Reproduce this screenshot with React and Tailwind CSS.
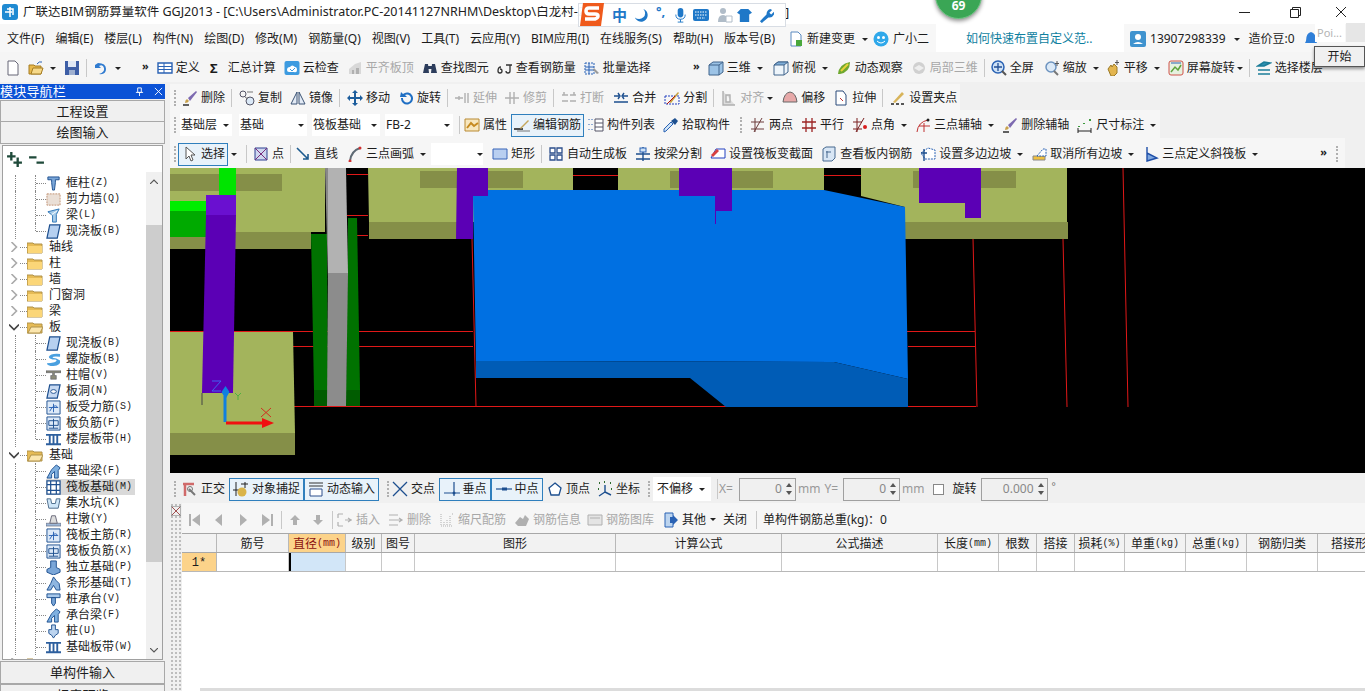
import React from 'react';

// small toolbar glyphs, all drawn on a 16x16 box
const B = '#2a62b4';
const D = '#333';
const G = '#b0b0b0';
const ICONS = {
  page: <path d="M3 1h7l3 3v11H3z" fill="#fff" stroke="#667" />,
  open: <><path d="M1 5h5l1 1h6v8H1z" fill="#e8b94c" stroke="#a57c22" /><path d="M3 14l2-6h10l-2 6z" fill="#f6d98a" stroke="#a57c22" /><path d="M9 4q2-3 5-2" fill="none" stroke="#2a62b4" /></>,
  save: <><path d="M1 1h14v14H1z" fill="#3d5ea6" /><path d="M4 1h8v6H4z" fill="#dfe7f5" /><path d="M5 10h6v5H5z" fill="#9fb0d0" /></>,
  undo: <path d="M3 2v6h6L7 6q4-2 5 2t-5 6q7 1 7-5T6 3L3 5z" fill="#2f7bd0" />,
  define: <><path d="M1 3h14v10H1z" fill="#fff" stroke={B} strokeWidth="1.4" /><path d="M7 3v10M1 6.5h14M1 9.5h14" stroke={B} /></>,
  cloud: <><rect x="0.5" y="1" width="15" height="14" rx="2" fill="#3d9be0" /><path d="M3 10q0-3 3-3 2-3 5 0 2 0 2 3t-3 2H5q-2 0-2-2z" fill="#fff" /><path d="M6 9l2 2 3-3" fill="none" stroke="#3d9be0" /></>,
  flat: <><path d="M2 9l6-5 6-2v12H2z" fill="#d8d8d8" /><path d="M5 10h2v4H5zm4-2h3v6H9z" fill={G} /></>,
  binoc: <><path d="M1 13l2-9h3l1 9zM9 13l1-9h3l2 9z" fill="#2d3d5c" /><path d="M6 6h4v3H6z" fill="#2d3d5c" /></>,
  rebarv: <path d="M1 11q0-4 3-4M1 11q0 2 2 2t2-2-2-2M9 5h6M13 5v6q0 2-2 2t-2-2" fill="none" stroke={D} strokeWidth="1.3" />,
  batch: <><path d="M1 3h9v11H1z" fill="#e8eef8" stroke={B} strokeDasharray="2 1" /><path d="M1 7h9M1 10h9M5 3v11" stroke={B} /><path d="M10 8l5 5-2 1-4-4z" fill="#999" /></>,
  cube: <><path d="M1 5l4-3h10v10l-4 3H1z" fill="#9cc3e6" stroke="#41648c" /><path d="M1 5h10v10M11 5l4-3" fill="none" stroke="#41648c" /></>,
  cubet: <><path d="M1 5l4-3h10v10l-4 3H1z" fill="#eef5fb" stroke="#41648c" /><path d="M1 5l4-3h10l-4 3z" fill="#7faed8" stroke="#41648c" /><path d="M11 5v10" stroke="#41648c" /></>,
  orbit: <><path d="M2 14Q3 4 14 2q0 10-10 12z" fill="#6fa82f" /><path d="M5 11l7-7" stroke="#e8d23a" strokeWidth="2" /></>,
  local: <><circle cx="8" cy="8" r="6" fill="#d0d0d0" /><path d="M3 8l5-3 5 3-5 3z" fill="#eee" /></>,
  full: <><circle cx="7" cy="7" r="6" fill="#cfe2f6" stroke={B} strokeWidth="1.5" /><path d="M7 3v8M3 7h8" stroke="#234f95" strokeWidth="1.3" /><path d="M11 11l4 4" stroke="#555" strokeWidth="2" /></>,
  zoom: <><circle cx="7" cy="7" r="5" fill="#dbe9f7" stroke="#6d93bf" strokeWidth="1.5" /><path d="M10 11l4 4" stroke="#777" strokeWidth="2" /><path d="M13 1v5M11 3.500h4" stroke="#555" /></>,
  hand: <><path d="M3 9l3-4 1 2 2-3 3 3v6l-3 3H6z" fill="#e3b54f" stroke="#9a7a28" /><path d="M12 0v5M10 2.500h4" stroke="#555" /></>,
  rotscr: <><rect x="1" y="1" width="14" height="14" rx="2" fill="#e6f1df" stroke="#d0534a" /><path d="M3 12l4-5 3 3 3-5" fill="none" stroke="#5ea33c" strokeWidth="1.5" /><path d="M3 3h10" stroke="#2a62b4" /></>,
  floors: <><path d="M2 6l6-4 6 1-6 3zM2 10h12M2 14h12" fill="#2e8fb0" stroke="#1c7d99" strokeWidth="1.6" /></>,
  brush: <><path d="M1 15h6" stroke="#222" strokeWidth="1.4" /><path d="M3 13q0-3 2-4l2 2q-1 2-4 2z" fill="#c9a24d" /><path d="M6 8l8-7 1 1-7 9z" fill="#7d6ab0" /></>,
  copy: <><circle cx="4" cy="4" r="3" fill="none" stroke="#556" /><circle cx="11" cy="11" r="4" fill="#dbe9f7" stroke="#556" /><path d="M8 2h6M6 7l3 2" stroke="#777" /></>,
  mirror: <path d="M7 2v12H1zM9 2v12h6z" fill="#e2eaf5" stroke="#3b5374" />,
  move: <path d="M8 0l3 3H9v4h4V5l3 3-3 3V9H9v4h2l-3 3-3-3h2V9H3v2L0 8l3-3v2h4V3H5z" fill="#1c5d9c" />,
  rotate: <path d="M3 2l2 2a6 6 0 1 1-2 4h2a4 4 0 1 0 2-3l2 2H2z" fill="#1f6fc4" />,
  extend: <path d="M1 8h8M11 3v10M14 3v10M5 6v4" stroke={G} strokeWidth="1.4" />,
  trim: <path d="M1 8h14M6 2v12M10 2v12" stroke={G} strokeWidth="1.4" />,
  break: <path d="M1 5h6M9 5h6M1 11h6M9 11h6M3 2v3M13 2v3" stroke={G} strokeWidth="1.5" />,
  merge: <path d="M1 6h5M10 6h5M1 12h14M5 3l2 3-2 3M11 3L9 6l2 3" fill="none" stroke="#1d4f8f" strokeWidth="1.4" />,
  split: <><path d="M1 6h14v8H1z" fill="none" stroke="#2340c0" strokeDasharray="2 1" /><path d="M5 12l9-10 1 1-8 10z" fill="#c8a040" /><path d="M3 14l8-8" stroke="#b01010" /></>,
  align: <path d="M2 1v14h12M5 5h4v7H5z" fill="#ddd" stroke={G} strokeWidth="1.4" />,
  offset: <path d="M1 12Q2 3 8 2q6 1 7 10z" fill="#e7a9a9" stroke="#666" />,
  stretch: <><path d="M3 1h7l3 4v10H3z" fill="#fff" stroke="#2b4a7a" /><path d="M7 8l3 3" stroke="#c03030" /></>,
  grip: <><path d="M1 14h3M6 14h3M11 14h3" stroke="#222" strokeWidth="1.4" /><path d="M3 12l9-10 2 2-9 9z" fill="#d8b45a" /></>,
  prop: <><path d="M1 2h14v12H1z" fill="#f7e7bf" stroke="#b98a32" /><path d="M3 11l4-5 3 3 4-3" fill="none" stroke="#c68a20" strokeWidth="2" /></>,
  edit: <><path d="M0 12h9" stroke="#222" strokeWidth="1.6" /><path d="M6 11l8-8 1 1-8 8z" fill="#c4a65c" /><path d="M3 14h13" stroke="#777" /></>,
  list: <><path d="M1 2v2M1 7v2M1 12v2M4 2v2M4 7v2M4 12v2" stroke="#2a62b4" strokeDasharray="1 1" /><path d="M7 2h8v12H7zM7 6h8M7 10h8" fill="#fff" stroke="#556" /></>,
  picker: <><path d="M1 15l2-1 7-7-2-2-7 7z" fill="#cfe4f7" stroke={B} /><path d="M8 4l4 4 3-4-3-3z" fill="#1d4f8f" /></>,
  twop: <path d="M1 5h13M1 12h13M4 15l8-14M5 1v14" stroke="#6d3d3d" fill="none" />,
  para: <path d="M1 5h14M1 11h14M5 1v14M11 1v14" stroke="#9c2424" strokeWidth="1.3" />,
  ang: <><path d="M1 5h9M1 12h9M4 15l8-14M5 1v14" stroke="#7a2020" fill="none" /><circle cx="13" cy="10" r="2" fill="#d81f1f" /></>,
  arc3: <><path d="M2 15Q3 5 13 3M9 6v9M4 9h11" fill="none" stroke="#c03030" /><circle cx="13" cy="3" r="1.500" fill="#222" /></>,
  dim: <><path d="M1 14h13M1 11v5M14 11v5" stroke="#222" /><path d="M2 9v1M7 6v1M13 2v2" stroke="#3c9a3c" strokeWidth="2" /></>,
  cursor: <path d="M4 1v12l3-3 2 5 2-1-2-5h4z" fill="#fff" stroke="#555" />,
  point: <><path d="M2 2h12v12H2z" fill="#cfd7f0" stroke="#2d3f90" /><path d="M2 2l12 12M14 2L2 14" stroke="#7a2d7a" /></>,
  line: <path d="M2 2l11 11M13 8v5H8" fill="none" stroke="#1d5b8f" strokeWidth="1.6" />,
  arc: <><path d="M3 15Q4 5 13 2" fill="none" stroke="#5f6b75" strokeWidth="2" /><circle cx="13" cy="2" r="1.500" fill="#d03030" /><circle cx="3" cy="15" r="1.500" fill="#d03030" /></>,
  rect: <path d="M1 3h14v10H1z" fill="#b9cff0" stroke="#3864b8" />,
  auto: <path d="M2 2h5v5H2zM9 2h5v5H9zM2 9h5v5H2zM9 9h5v5H9z" fill="#fff" stroke="#2d4f8c" strokeWidth="1.3" />,
  beam: <><path d="M1 8h14M1 13h14M8 1v14" stroke="#1d4f8f" strokeWidth="1.4" /><rect x="5" y="2" width="6" height="4" fill="#cfe2f6" stroke={B} /></>,
  section: <><path d="M1 12l5-9h9v9z" fill="#fff" stroke="#2340c0" /><path d="M1 9l6-6 2 2-6 6z" fill="#d84040" /></>,
  view: <><path d="M2 3l3-2h9v11l-3 3H2z" fill="#d8e6f5" stroke="#46698f" /><path d="M6 5v7M5 6h5" stroke="#46698f" /></>,
  slope: <><path d="M1 7l7-5 7 2v9H5z" fill="#fff" stroke="#2a62b4" strokeDasharray="2 1" /><path d="M1 7h6M4 3v12" stroke="#1d4f8f" strokeWidth="1.4" /></>,
  cancel: <><path d="M2 10h12v4H2z" fill="#f0c040" stroke="#888" /><path d="M6 10l6-7h3v7z" fill="#fff" stroke="#2a62b4" strokeDasharray="2 1" /></>,
  tri: <path d="M4 1v14M4 15l10-3L4 7z" fill="#7fa8e0" stroke="#1f4fa8" strokeWidth="1.4" />,
  ortho: <><path d="M1 3h11M3 3v12" stroke="#d06a6a" strokeWidth="2.500" /><path d="M7 8l6 6" stroke="#777" strokeWidth="2" /><circle cx="8" cy="8" r="2.500" fill="none" stroke="#777" /></>,
  snap: <><path d="M3 1v14M12 1v6M0 9h6M8 3h7" stroke="#222" /><circle cx="9" cy="11" r="4.500" fill="#d9b44a" /></>,
  dyn: <><path d="M1 2h14M1 5h14" stroke="#333" /><path d="M2 8h12v7H2z" fill="#fff" stroke="#2d4f8c" /></>,
  cross: <path d="M1 1l14 14M15 1L1 15" stroke="#1d4f8f" strokeWidth="1.3" />,
  perp: <><path d="M0 12h16M10 1v14" stroke="#1d4f8f" strokeWidth="1.2" /><circle cx="10" cy="12" r="1.500" fill="#1d4f8f" /></>,
  mid: <><path d="M0 8h16" stroke="#1d4f8f" strokeWidth="1.2" /><rect x="6" y="6.500" width="5" height="3" fill="#1d4f8f" /></>,
  vertex: <path d="M8 2l6 5-2 7H4L2 7z" fill="#fff" stroke="#1d4f8f" strokeWidth="1.3" />,
  coord: <><path d="M8 4v7L2 15M8 11l6 3" fill="none" stroke="#1d4f8f" strokeWidth="1.4" /><path d="M2 2h1M7 1h1M13 2h1M1 8h1M14 8h1" stroke="#2d6a2d" strokeWidth="2" /></>,
  first: <path d="M2 2h2v12H2zM13 2v12L5 8z" fill={G} />,
  prev: <path d="M11 2v12L4 8z" fill={G} />,
  next: <path d="M5 2v12l7-6z" fill={G} />,
  last: <path d="M14 2h-2v12h2zM3 2v12l8-6z" fill={G} />,
  up: <path d="M8 3l5 5H10v5H6V8H3z" fill={G} />,
  down: <path d="M8 13l5-5H10V3H6v5H3z" fill={G} />,
  ins: <path d="M1 2h5M1 14h5M1 2v4M1 10v4M8 8h7M11 6l3 2-3 2" fill="none" stroke={G} strokeWidth="1.2" />,
  rem: <path d="M1 3h9M1 13h9M1 8h13M11 6l3 2-3 2" fill="none" stroke={G} strokeWidth="1.2" />,
  scale: <path d="M2 2v12h12M5 13v-3M8 13V8M11 13V4M13 2h2" fill="none" stroke={G} strokeDasharray="1 1" />,
  info: <path d="M1 11l5-6 3 2 2-4 4 4-3 7H4z" fill={G} />,
  lib: <path d="M1 3h14v10H1zM3 6h10" fill="#e4e4e4" stroke={G} />,
  other: <><path d="M2 1h8v14H2z" fill="#bcd4ef" stroke={B} /><path d="M7 5h3V3l5 5-5 5v-2H7z" fill="#2a62b4" /></>,
  tcol: <path d="M2 1h12v3h-4v3l-1 8H7L6 7V4H2z" fill="#7aa6d8" stroke="#1d4f8f" />,
  twall: <path d="M1 2h14v12H1z" fill="#eadfd6" stroke="#c09070" strokeDasharray="2 1" />,
  tbeam: <><path d="M2 4l12-3-3 6v8H7V8z" fill="#a8cdea" stroke="#2a72b4" /><path d="M6 7l6-4" stroke="#fff" /></>,
  tslab: <path d="M4 1h11l-3 14H1z" fill="#b6d0f0" stroke="#1d4f8f" strokeWidth="1.3" />,
  tspiral: <path d="M15 2Q5 1 3 5q0 3 7 3 3 1-1 3-4 1-8 1 0 3 7 3 8-1 7-6-4-3-8-3 0-2 8-1z" fill="#4aa0e0" />,
  tcap: <path d="M0 3h16v2H9v3h2v4H5V8h2V5H0z" fill="#8a8a7a" stroke="#445" strokeWidth="0.5" />,
  thole: <><path d="M4 1h11l-3 14H1z" fill="#c6d9f2" stroke="#1d4f8f" strokeWidth="1.3" /><ellipse cx="8" cy="8" rx="3" ry="2" fill="#fff" stroke="#1d4f8f" /></>,
  tbar: <><path d="M1 1h14v14H1z" fill="#dce9f8" stroke="#1d4f8f" /><path d="M8 4v9M3 8h10M4 12q4-8 8-5" fill="none" stroke="#2a62b4" /></>,
  tneg: <><path d="M1 1h14v14H1z" fill="#dce9f8" stroke="#1d4f8f" /><path d="M3 5h10v5H3zM8 3v10M3 13h10" fill="none" stroke="#1d4f8f" /></>,
  tband: <path d="M0 2h16v2H0zM0 12h16v2H0zM3 4h2v8H3zM7 4h2v8H7zM11 4h2v8h-2z" fill="#2d5f9e" />,
  tfbeam: <><path d="M1 15l5-9 5-5 4 3-2 3v8H9V8l-3 3v4z" fill="#7fb0e0" stroke="#1d4f8f" /></>,
  traft: <path d="M1 1h14v14H1zM1 5h14M1 11h14M5 1v14M11 1v14" fill="#fff" stroke="#1d4f8f" strokeWidth="1.3" />,
  tpit: <><path d="M1 3h4l1 5h4l1-5h4l-2 10H3z" fill="#cfe6f8" stroke="#4a6a8a" /></>,
  tpier: <><path d="M0 12h16v3H0z" fill="#9eb8d8" stroke="#445" strokeWidth="0.5" /><path d="M6 4h4l2 8H4z" fill="#ddd" stroke="#667" /></>,
  tiso: <path d="M5 1h6v7l4 2v3l-7 3-7-3v-3l4-2z" fill="#7aa6d8" stroke="#1d4f8f" />,
  tstrip: <path d="M1 15l4-7 3-7 3 4 3 3 1 7h-4L8 10l-3 5z" fill="#8fb6e0" stroke="#1d4f8f" />,
  tcapb: <><path d="M1 2h14v4H1z" fill="#a8c8ea" stroke="#1d4f8f" /><path d="M6 6h4v6l-2 3-2-3z" fill="#7aa6d8" stroke="#1d4f8f" /></>,
  tpile: <path d="M6 1h4v5h3v4l-3 2-2 3-2-3-3-2V6h3z" fill="#bcd4ef" stroke="#1d4f8f" />,
};

function Ico({ n, className = 'size-4' }) {
  return (
    <svg viewBox="0 0 16 16" className={'shrink-0 ' + className}>
      {ICONS[n]}
    </svg>
  );
}

// one toolbar entry: icon and label
function T({ i, t, gray, cls = '' }) {
  return (
    <div className={'flex items-center gap-[3px] shrink-0 ' + (gray ? 'text-[#a8a8a8] ' : '') + cls}>
      {i && <Ico n={i} />}
      {t && <span className="whitespace-nowrap">{t}</span>}
    </div>
  );
}

const Caret = ({ cls = '' }) => (
  <span className={'w-0 h-0 shrink-0 -ml-[1px] border-x-[3px] border-x-transparent border-t-[3px] border-t-[#222] ' + cls} />
);
const Sep = ({ cls = '' }) => <span className={'w-px h-[18px] shrink-0 -mx-[2px] bg-[#c8c8c8] ' + cls} />;
const Grip = ({ cls = '' }) => (
  <span className={'w-[2px] h-[16px] shrink-0 border-l-2 border-dotted border-[#b0b0b0] ' + cls} />
);
const More = ({ cls = '' }) => <span className={'shrink-0 text-[11px] font-bold leading-none -mt-[6px] ' + cls}>»</span>;

function Combo({ t, cls }) {
  return (
    <div className={'flex items-center justify-between h-[22px] bg-white pl-[1px] pr-[3px] shrink-0 ' + cls}>
      <span className="whitespace-nowrap">{t}</span>
      <span className="w-0 h-0 border-x-[3px] border-x-transparent border-t-[3px] border-t-[#222]" />
    </div>
  );
}

function Pressed({ i, t, cls = '' }) {
  return (
    <div className={'flex items-center justify-center gap-[3px] h-[23px] px-[2px] border border-[#2f7fbd] bg-[#e8f2fa] shrink-0 ' + cls}>
      <Ico n={i} />
      <span className="whitespace-nowrap">{t}</span>
    </div>
  );
}

function Spin({ v, cls }) {
  return (
    <div className={'flex items-center justify-end h-[23px] border border-[#a0a0a0] bg-[#f0f0f0] text-[#888] pr-[2px] shrink-0 ' + cls}>
      <span className="mr-[4px]">{v}</span>
      <span className="flex flex-col gap-[4px] pr-[1px]">
        <span className="w-0 h-0 border-x-[3px] border-x-transparent border-b-[4px] border-b-[#555]" />
        <span className="w-0 h-0 border-x-[3px] border-x-transparent border-t-[4px] border-t-[#555]" />
      </span>
    </div>
  );
}

const MENU = ['文件(F)', '编辑(E)', '楼层(L)', '构件(N)', '绘图(D)', '修改(M)', '钢筋量(Q)', '视图(V)', '工具(T)', '云应用(Y)', 'BIM应用(I)', '在线服务(S)', '帮助(H)', '版本号(B)'];

// [kind, icon, name, code]; f = closed folder, o = open folder, c = child, l = last child
const TREE = [
  ['c', 'tcol', '框柱', '(Z)'], ['c', 'twall', '剪力墙', '(Q)'], ['c', 'tbeam', '梁', '(L)'], ['l', 'tslab', '现浇板', '(B)'],
  ['f', '', '轴线'], ['f', '', '柱'], ['f', '', '墙'], ['f', '', '门窗洞'], ['f', '', '梁'], ['o', '', '板'],
  ['c', 'tslab', '现浇板', '(B)'], ['c', 'tspiral', '螺旋板', '(B)'], ['c', 'tcap', '柱帽', '(V)'], ['c', 'thole', '板洞', '(N)'],
  ['c', 'tbar', '板受力筋', '(S)'], ['c', 'tneg', '板负筋', '(F)'], ['l', 'tband', '楼层板带', '(H)'], ['o', '', '基础'],
  ['c', 'tfbeam', '基础梁', '(F)'], ['c', 'traft', '筏板基础', '(M)', true], ['c', 'tpit', '集水坑', '(K)'], ['c', 'tpier', '柱墩', '(Y)'],
  ['c', 'tbar', '筏板主筋', '(R)'], ['c', 'tneg', '筏板负筋', '(X)'], ['c', 'tiso', '独立基础', '(P)'], ['c', 'tstrip', '条形基础', '(T)'],
  ['c', 'tcapb', '桩承台', '(V)'], ['c', 'tfbeam', '承台梁', '(F)'], ['c', 'tpile', '桩', '(U)'], ['c', 'tband', '基础板带', '(W)'],
  ['f', '', ''],
];

function Folder({ open }) {
  return (
    <svg viewBox="0 0 16 13" className="w-[16px] h-[13px] shrink-0">
      <path d="M0 2h6l1 1h8v9H0z" fill="#e6bb55" stroke="#b0924a" />
      {open ? <path d="M1 12l3-6h12l-3 6z" fill="#fbe6ae" stroke="#b0924a" /> : <path d="M1 5h14v7H1z" fill="#fbd678" />}
    </svg>
  );
}

function TreeRow({ row }) {
  const [kind, icon, name, code, sel] = row;
  if (kind === 'f' || kind === 'o') {
    return (
      <div className="flex items-center h-4 pl-[6px] shrink-0">
        <svg viewBox="0 0 8 8" className="w-[10px] h-[10px] shrink-0">
          <path d={kind === 'o' ? 'M0 2l4 4 4-4' : 'M2 0l4 4-4 4'} fill="none" stroke={kind === 'o' ? '#444' : '#aaa'} strokeWidth="1.3" />
        </svg>
        <span className="w-[7px] ml-[1px] border-t border-dotted border-[#888] shrink-0" />
        <Folder open={kind === 'o'} />
        <span className="ml-[6px]">{name}</span>
      </div>
    );
  }
  return (
    <div className="flex items-center h-4 pl-[12px] shrink-0">
      <span className="h-4 w-[20px] border-l border-dotted border-[#888] shrink-0" />
      <span className={'w-px border-l border-dotted border-[#888] shrink-0 ' + (kind === 'l' ? 'h-2 self-start' : 'h-4')} />
      <span className="w-[10px] border-t border-dotted border-[#888] shrink-0" />
      <div className={'flex items-center h-4 ' + (sel ? 'bg-[#d9d9d9] pr-[3px]' : '')}>
        <Ico n={icon} className="size-[15px]" />
        <span className="ml-[5px] whitespace-nowrap">{name}</span>
        <span className="font-['Liberation_Mono',monospace] text-[10px]">{code}</span>
      </div>
    </div>
  );
}

const COLS = 'grid grid-cols-[35px_72px_57px_36px_33px_201px_166px_156px_61px_38px_38px_50px_61px_61px_71px_75px]';
const HEAD = [['筋号'], ['直径', '(mm)'], ['级别'], ['图号'], ['图形'], ['计算公式'], ['公式描述'], ['长度', '(mm)'], ['根数'], ['搭接'], ['损耗', '(%)'], ['单重', '(kg)'], ['总重', '(kg)'], ['钢筋归类'], ['搭接形式']];

function Scene() {
  const olive = '#a3b45c';
  const oliveD = '#858f48';
  const purple = '#5b00b5';
  const blue = '#0070e2';
  return (
    <svg viewBox="170 168 1195 305" className="w-[1195px] h-[305px] block bg-black shrink-0">
      <g stroke="#e01818" strokeWidth="1" fill="none">
        <path d="M170 331.500h303M293 346.500h180M294 406.500h682M472 238l4 169M347 174.500h21M347 215.500h21M357 235.500h11M573 175.500h45M824 175.500h37M907 331.500h68M908 346.500h67M973 238l4 169M1063 239l4 168M1123 168l5 239" />
      </g>
      {/* left slab */}
      <path d="M170 168h155v64h-155z" fill={olive} />
      <path d="M170 174h112v17H170z" fill={oliveD} />
      <path d="M170 232h141v17H170z" fill={oliveD} />
      <path d="M219 168h17v27h-17z" fill="#00e400" />
      <path d="M170 201h36v10h-36z" fill="#00ee00" />
      <path d="M170 211h36v26h-36z" fill="#00aa00" />
      {/* bottom left footing */}
      <path d="M170 332h123l2 101H170z" fill={olive} />
      <path d="M170 433h125v22H170z" fill={oliveD} />
      <path d="M206 195h30v20h-30z" fill="#6a10d0" />
      <path d="M206 215h30l-3 178h-31z" fill={purple} />
      <path d="M202 393v12" stroke="#444" />
      {/* green and grey columns */}
      <path d="M311 234h16l1 156h-14z" fill="#007200" />
      <path d="M314 390h14v16h-14z" fill="#005c00" />
      <path d="M348 218h9l3 172h-14z" fill="#007200" />
      <path d="M346 390h14v16h-14z" fill="#005c00" />
      <path d="M325 168h6v112h-3z" fill="#888" />
      <path d="M328 168h18l2 105h-20z" fill="#b2b2b2" />
      <path d="M328 273h20l-2 133h-19z" fill="#8c8c8c" />
      {/* middle slabs */}
      <path d="M368 168h205v22H488v32H369z" fill={olive} />
      <path d="M420 171h103v17H420z" fill={oliveD} />
      <path d="M369 222h88v17h-88z" fill={oliveD} />
      <path d="M618 168h206v22H618z" fill={olive} />
      <path d="M670 171h103v17H670z" fill={oliveD} />
      <path d="M861 168h206v54H905v-15l-44-11z" fill={olive} />
      <path d="M905 222h163v17H905z" fill={oliveD} />
      <path d="M913 171h103v17H913z" fill={oliveD} />
      <path d="M457 168h31v28h-15v43h-17z" fill={purple} />
      {/* blue raft */}
      <path d="M473 196h15v-6h336l81 17 3 172-74-17-358-1z" fill={blue} />
      <path d="M476 361l358 1 74 17v28H726l-36-29H476z" fill="#005cb6" />
      <path d="M679 168h53v43h-16v-15h-37z" fill={purple} />
      <path d="M715.500 196v28" stroke={purple} />
      <path d="M919 168h62v50h-16v-15h-46z" fill={purple} />
      {/* axis marker */}
      <path d="M225 422v-26" stroke="#1080e0" strokeWidth="3" />
      <path d="M225.500 386l4 6-4 7-4-7z" fill="#1080e0" />
      <path d="M226 423h38" stroke="#f01010" strokeWidth="3" />
      <path d="M262 418l12 5-12 5z" fill="#f01010" />
      <path d="M212 381h9l-9 10h9" fill="none" stroke="#4060f0" />
      <path d="M261 408l10 9M271 408l-10 9" stroke="#d03020" />
      <path d="M235 393l3 3 3-3M238 396v4" fill="none" stroke="#50b040" />
    </svg>
  );
}

export default function App() {
  return (
    <div className="relative w-[1365px] h-[691px] overflow-hidden flex flex-col bg-[#f0f0f0] text-[12px] leading-none text-[#1c1c1c] font-['Noto_Sans','Noto_Sans_CJK_SC',sans-serif]">
      {/* title bar */}
      <div className="h-[24px] shrink-0 bg-white flex items-center pl-[2px]">
        <svg viewBox="0 0 16 16" className="size-4 shrink-0">
          <rect width="16" height="16" rx="3" fill="#1f8ad2" />
          <path d="M8 3v10M3 8h7M5 5h6v6" fill="none" stroke="#fff" strokeWidth="1.5" />
        </svg>
        <span className="ml-[5px] w-[762px] whitespace-nowrap overflow-hidden text-[12.500px] text-[#222]">
          广联达BIM钢筋算量软件 GGJ2013 - [C:\Users\Administrator.PC-20141127NRHM\Desktop\白龙村-2
        </span>
        <span className="text-[13px]">]</span>
        <div className="ml-auto flex items-center">
          <span className="w-[11px] h-px bg-[#222] mr-[40px]" />
          <svg viewBox="0 0 11 11" className="size-[11px] mr-[34px]">
            <path d="M.5 2.500h8v8h-8zM2.500 2.500v-2h8v8h-2" fill="none" stroke="#222" />
          </svg>
          <svg viewBox="0 0 12 12" className="size-[12px] mr-[18px]">
            <path d="M1 1l10 10M11 1L1 11" stroke="#222" />
          </svg>
        </div>
      </div>

      {/* menu bar */}
      <div className="h-[28px] shrink-0 bg-[#f7f7f7] flex items-center pt-[2px] pl-[7px] gap-[10px]">
        <div className="flex items-center gap-[11px] shrink-0">
          {MENU.map((m) => (
            <span key={m} className="whitespace-nowrap">{m}</span>
          ))}
        </div>
        <svg viewBox="0 0 16 16" className="size-4 shrink-0 -mr-[7px] ml-[3px]">
          <path d="M3 1h7l3 3v11H3z" fill="#fff" stroke="#5a8ac0" />
          <path d="M8 9h6v6H8z" fill="#4aa83c" />
        </svg>
        <span className="whitespace-nowrap">新建变更</span>
        <Caret cls="ml-[-3px]" />
        <svg viewBox="0 0 16 16" className="size-4 shrink-0 -mr-[6px] ml-[-5px]">
          <circle cx="8" cy="8" r="7.500" fill="#2fa8ea" />
          <circle cx="5.500" cy="6.500" r="1.500" fill="#fff" />
          <circle cx="10.500" cy="6.500" r="1.500" fill="#fff" />
          <path d="M4 10q4 4 8 0" fill="none" stroke="#fff" />
        </svg>
        <span className="whitespace-nowrap">广小二</span>
        <div className="w-[188px] h-[28px] -mt-[2px] ml-[-3px] pt-[2px] bg-white flex items-center pl-[30px] text-[#0f7f9f] whitespace-nowrap shrink-0">如何快速布置自定义范..</div>
        <svg viewBox="0 0 16 16" className="size-4 shrink-0 ml-[-4px] -mr-[6px]">
          <rect width="16" height="16" rx="2" fill="#3f93cf" />
          <circle cx="8" cy="6" r="3" fill="#fff" />
          <path d="M3 13q5-4 10 0z" fill="#fff" />
        </svg>
        <span className="whitespace-nowrap">13907298339</span>
        <Caret cls="ml-[-2px]" />
        <span className="whitespace-nowrap ml-[-1px]">造价豆:0</span>
        <svg viewBox="0 0 12 16" className="w-[12px] h-4 shrink-0">
          <path d="M6 1Q1 2 1 10l-1 2h12l-1-2Q11 2 6 1z" fill="#2f7fd8" />
        </svg>
      </div>

      {/* top toolbar */}
      <div className="h-[30px] shrink-0 bg-[#f5f5f5] flex items-center pt-[2px] pl-[5px] gap-[8px]">
        <T i="page" />
        <T i="open" cls="ml-[-1px]" />
        <Caret cls="ml-[-2px]" />
        <T i="save" />
        <Sep />
        <T i="undo" cls="ml-[-1px]" />
        <Caret cls="ml-[-1px]" />
        <More cls="ml-[13px]" />
        <T i="define" t="定义" />
        <span className="font-bold text-[13px] w-[12px] text-center shrink-0">Σ</span>
        <span className="whitespace-nowrap">汇总计算</span>
        <T i="cloud" t="云检查" />
        <T i="flat" t="平齐板顶" gray />
        <T i="binoc" t="查找图元" />
        <T i="rebarv" t="查看钢筋量" />
        <T i="batch" t="批量选择" />
        <More cls="ml-[34px]" />
        <T i="cube" t="三维" />
        <Caret cls="ml-[-2px]" />
        <T i="cubet" t="俯视" cls="ml-[2px]" />
        <Caret cls="ml-[-2px]" />
        <T i="orbit" t="动态观察" />
        <T i="local" t="局部三维" gray />
        <Sep />
        <T i="full" t="全屏" />
        <T i="zoom" t="缩放" cls="ml-[2px]" />
        <Caret cls="ml-[-2px]" />
        <T i="hand" t="平移" cls="ml-[-2px]" />
        <Caret cls="ml-[-2px]" />
        <T i="rotscr" t="屏幕旋转" />
        <Caret cls="ml-[-6px]" />
        <Sep />
        <T i="floors" t="选择楼层" />
      </div>
      <div className="h-[2px] shrink-0" />

      <div className="flex-1 flex min-h-0">
        {/* module nav */}
        <aside className="w-[165px] shrink-0 flex flex-col">
          <div className="h-[15px] shrink-0 bg-[#0b52d6] text-white flex items-center text-[13px] tracking-[0.2px]">
            <span>模块导航栏</span>
            <svg viewBox="0 0 10 10" className="size-[9px] ml-[69px]">
              <path d="M3 1h4v5H3zM1 6h8M5 6v4" fill="none" stroke="#fff" />
            </svg>
            <svg viewBox="0 0 10 10" className="size-[9px] ml-[10px]">
              <path d="M1 1l8 8M9 1L1 9" stroke="#fff" />
            </svg>
          </div>
          <div className="h-[22px] shrink-0 mt-[1px] border border-[#a8a8a8] bg-[#f0f0f0] text-[13px] flex items-center justify-center">工程设置</div>
          <div className="h-[22px] shrink-0 border border-t-0 border-[#a8a8a8] bg-[#f0f0f0] text-[13px] flex items-center justify-center">绘图输入</div>
          <div className="flex-1 min-h-0 mx-[2px] mt-[1px] flex flex-col border border-[#a0a0a0] bg-white">
            <div className="h-[26px] shrink-0 flex items-center pl-[3px] gap-[5px]">
              <svg viewBox="0 0 16 16" className="size-[17px]">
                <path d="M5 1v8M1 5h8M11 6v9M7 11h8" stroke="#1f4a3a" strokeWidth="2.200" />
              </svg>
              <svg viewBox="0 0 16 16" className="size-[17px]">
                <path d="M1 6h7M8 11h7" stroke="#1f4a3a" strokeWidth="2.200" />
              </svg>
            </div>
            <div className="flex-1 min-h-0 flex">
              <div className="flex-1 min-w-0 overflow-hidden flex flex-col pt-[3px]">
                {TREE.map((r, idx) => (
                  <TreeRow key={idx} row={r} />
                ))}
              </div>
              <div className="w-[16px] shrink-0 bg-[#f0f0f0] flex flex-col">
                <div className="h-[19px] shrink-0 flex items-center justify-center text-[#555]">
                  <svg viewBox="0 0 8 5" className="w-[8px] h-[5px]"><path d="M0 5l4-4 4 4" fill="none" stroke="#555" strokeWidth="1.200" /></svg>
                </div>
                <div className="h-[337px] mt-[34px] shrink-0 bg-[#cdcdcd]" />
                <div className="mt-auto h-[17px] shrink-0 flex items-center justify-center">
                  <svg viewBox="0 0 8 5" className="w-[8px] h-[5px]"><path d="M0 0l4 4 4-4" fill="none" stroke="#555" strokeWidth="1.200" /></svg>
                </div>
              </div>
            </div>
          </div>
          <div className="h-[23px] shrink-0 mt-[1px] border border-[#a8a8a8] bg-[#f0f0f0] text-[13px] flex items-center justify-center">单构件输入</div>
          <div className="h-[22px] shrink-0 -mb-[15px] border border-[#a8a8a8] bg-[#f0f0f0] text-[13px] flex items-center justify-center">报表预览</div>
        </aside>

        {/* work area */}
        <main className="flex-1 min-w-0 ml-[5px] flex flex-col">
          <div className="h-[26px] shrink-0 w-[790px] bg-[#f6f6f6] flex items-center pt-[2px] pl-[4px] gap-[8px]">
            <Grip />
            <T i="brush" t="删除" cls="ml-[-2px]" />
            <Sep />
            <T i="copy" t="复制" cls="ml-[1px]" />
            <T i="mirror" t="镜像" />
            <Sep />
            <T i="move" t="移动" cls="ml-[1px]" />
            <T i="rotate" t="旋转" />
            <Sep />
            <T i="extend" t="延伸" gray />
            <T i="trim" t="修剪" gray cls="ml-[-1px]" />
            <Sep />
            <T i="break" t="打断" gray cls="ml-[1px]" />
            <T i="merge" t="合并" cls="ml-[1px]" />
            <T i="split" t="分割" />
            <Sep />
            <T i="align" t="对齐" gray cls="ml-[1px]" />
            <Caret cls="ml-[-5px]" />
            <T i="offset" t="偏移" cls="ml-[1px]" />
            <T i="stretch" t="拉伸" />
            <Sep />
            <T i="grip" t="设置夹点" cls="ml-[1px]" />
          </div>

          <div className="h-[28px] shrink-0 w-[990px] bg-[#f6f6f6] flex items-center pt-[2px] pl-[4px] gap-[8px]">
            <Grip />
            <Combo t="基础层" cls="w-[52px] ml-[-4px]" />
            <Combo t="基础" cls="w-[68px] ml-[-1px]" />
            <Combo t="筏板基础" cls="w-[68px] ml-[-3px]" />
            <Combo t="FB-2" cls="w-[68px] ml-[-3px]" />
            <Sep cls="ml-[-2px]" />
            <T i="prop" t="属性" cls="ml-[-2px]" />
            <Pressed i="edit" t="编辑钢筋" cls="ml-[-4px]" />
            <T i="list" t="构件列表" cls="ml-[-4px]" />
            <T i="picker" t="拾取构件" />
            <Grip cls="ml-[2px]" />
            <T i="twop" t="两点" />
            <T i="para" t="平行" />
            <T i="ang" t="点角" />
            <Caret cls="ml-[-2px]" />
            <T i="arc3" t="三点辅轴" />
            <Caret cls="ml-[-2px]" />
            <T i="brush" t="删除辅轴" />
            <T i="dim" t="尺寸标注" />
            <Caret cls="ml-[-2px]" />
          </div>

          <div className="h-[30px] shrink-0 w-[1175px] bg-[#f6f6f6] flex items-center pt-[2px] pl-[4px] gap-[8px]">
            <Grip />
            <Pressed i="cursor" t="选择" cls="ml-[-6px] pl-[3px] pr-[2px]" />
            <Caret cls="ml-[-5px]" />
            <Sep cls="ml-[1px]" />
            <T i="point" t="点" />
            <Sep />
            <T i="line" t="直线" cls="ml-[-2px]" />
            <T i="arc" t="三点画弧" cls="ml-[1px]" />
            <Caret cls="ml-[-2px]" />
            <div className="w-[52px] h-[22px] bg-white shrink-0 ml-[-3px] flex items-center justify-end pr-[0px]">
              <span className="w-0 h-0 border-x-[3px] border-x-transparent border-t-[3px] border-t-[#222]" />
            </div>
            <T i="rect" t="矩形" cls="ml-[1px]" />
            <Sep />
            <T i="auto" t="自动生成板" />
            <T i="beam" t="按梁分割" />
            <T i="section" t="设置筏板变截面" />
            <T i="view" t="查看板内钢筋" />
            <T i="slope" t="设置多边边坡" />
            <Caret cls="ml-[-2px]" />
            <T i="cancel" t="取消所有边坡" />
            <Caret cls="ml-[-2px]" />
            <T i="tri" t="三点定义斜筏板" cls="ml-[1px]" />
            <Caret cls="ml-[-2px]" />
            <More cls="ml-[54px]" />
            <Grip cls="ml-[1px]" />
          </div>

          <Scene />

          {/* snap toolbar */}
          <div className="h-[30px] shrink-0 bg-[#f0f0f0] flex items-center pt-[2px] pl-[4px] gap-[8px]">
            <Grip />
            <T i="ortho" t="正交" cls="ml-[-2px]" />
            <Pressed i="snap" t="对象捕捉" cls="ml-[-4px] w-[75px]" />
            <Pressed i="dyn" t="动态输入" cls="-ml-[8px] w-[75px]" />
            <Grip />
            <T i="cross" t="交点" cls="ml-[-5px]" />
            <Pressed i="perp" t="垂点" cls="ml-[-4px] w-[52px]" />
            <Pressed i="mid" t="中点" cls="-ml-[8px] w-[52px]" />
            <T i="vertex" t="顶点" cls="ml-[-4px]" />
            <T i="coord" t="坐标" cls="ml-[-1px]" />
            <Grip />
            <div className="w-[58px] h-[24px] bg-white flex items-center justify-between pl-[4px] pr-[6px] ml-[-5px] shrink-0">
              <span className="whitespace-nowrap">不偏移</span>
              <span className="w-0 h-0 border-x-[3px] border-x-transparent border-t-[3px] border-t-[#222]" />
            </div>
            <Sep cls="h-[20px]" />
            <span className="text-[#999] ml-[-5px]">X=</span>
            <Spin v="0" cls="w-[57px] ml-[-2px]" />
            <span className="text-[#999] ml-[-6px]">mm</span>
            <span className="text-[#999] ml-[-4px]">Y=</span>
            <Spin v="0" cls="w-[57px] ml-[-3px]" />
            <span className="text-[#999] ml-[-6px]">mm</span>
            <span className="size-[11px] border border-[#888] bg-white shrink-0" />
            <span className="ml-[1px]">旋转</span>
            <Spin v="0.000" cls="w-[67px] ml-[-4px]" />
            <span className="text-[#777] ml-[-4px] -mt-[6px] text-[10px]">°</span>
          </div>

          {/* rebar panel */}
          <div className="flex-1 min-h-0 flex">
            <div className="w-[12px] shrink-0 bg-[radial-gradient(#bdbdbd_1px,transparent_1px)] bg-[length:4px_4px]">
              <svg viewBox="0 0 10 10" className="size-[10px] mt-[3px] ml-[1px] bg-[#f0f0f0]">
                <path d="M0 0h10v10H0z" fill="#eee" stroke="#777" />
                <path d="M1 1l8 8M9 1L1 9" stroke="#a05050" />
              </svg>
            </div>
            <div className="flex-1 min-w-0 flex flex-col">
              <div className="h-[30px] shrink-0 bg-[#f6f6f6] flex items-center pt-[3px] pl-[5px] gap-[8px]">
                <T i="first" gray />
                <T i="prev" gray />
                <T i="next" gray />
                <T i="last" gray />
                <Sep />
                <T i="up" gray cls="ml-[-1px]" />
                <T i="down" gray cls="ml-[-1px]" />
                <Sep />
                <T i="ins" t="插入" gray cls="ml-[-2px]" />
                <T i="rem" t="删除" gray />
                <T i="scale" t="缩尺配筋" gray />
                <T i="info" t="钢筋信息" gray />
                <T i="lib" t="钢筋图库" gray cls="ml-[-2px]" />
                <T i="other" t="其他" cls="ml-[1px]" />
                <Caret cls="ml-[-4px]" />
                <span className="whitespace-nowrap ml-[-1px]">关闭</span>
                <Sep cls="ml-[1px]" />
                <span className="whitespace-nowrap">单构件钢筋总重(kg)：0</span>
              </div>
              <div className="flex-1 min-h-0 bg-white overflow-hidden flex flex-col relative">
                <div className={COLS + ' h-[20px] shrink-0 bg-[#f2f2f2] border-t border-b border-[#a8a8a8]'}>
                  <div className="border-r border-[#b8b8b8]" />
                  {HEAD.map(([a, b], k) => (
                    <div key={a} className={'border-r border-[#b8b8b8] flex items-center justify-center pt-[2px] whitespace-nowrap overflow-hidden ' + (k === 1 ? 'bg-[#fcd38a] text-[#8a1010]' : '')}>
                      <span>{a}</span>
                      {b && <span className="font-['Liberation_Mono',monospace] text-[10px]">{b}</span>}
                    </div>
                  ))}
                </div>
                <div className={COLS + ' h-[19px] shrink-0 border-b border-[#b8b8b8]'}>
                  <div className="bg-[#fcd38a] border-r border-[#b8b8b8] flex items-center justify-center pt-[1px] font-['Liberation_Mono',monospace]">1*</div>
                  {HEAD.map(([a], k) => (
                    <div key={a} className={'border-r border-[#c8c8c8] ' + (k === 1 ? 'bg-[#d2e6f8] border-l-2 border-l-black' : '')} />
                  ))}
                </div>
                <div className="mt-auto ml-[18px] h-[3px] shrink-0 bg-[#dcdcdc]" />
              </div>
            </div>
          </div>
        </main>
      </div>

      {/* green badge from another window */}
      <div className="absolute left-[935px] top-[-28px] size-[47px] rounded-full bg-[#3aa655] border border-[#6fc684] shadow-[0_2px_4px_rgba(0,0,0,0.45)] flex items-end justify-center pb-[6px] text-white text-[12px] font-bold">69</div>

      {/* input method bar */}
      <div className="absolute left-[578px] top-[3px] w-[208px] h-[24px] bg-white/95 border border-[#d8dde4] flex items-center text-[#1f78c8]">
        <svg viewBox="0 0 28 28" className="size-[28px] shrink-0 -ml-px -mt-[2px]">
          <path d="M5 3h21l-3 23H2z" fill="#ef5a1c" />
          <path d="M21 8H11q-3 0-3 3t3 3h6q3 0 3 2t-3 3H7" fill="none" stroke="#fff" strokeWidth="3.500" />
        </svg>
        <span className="ml-[6px] font-bold text-[15px] shrink-0">中</span>
        <svg viewBox="0 0 16 16" className="size-[15px] ml-[7px] shrink-0"><path d="M10 1a7 7 0 1 1-9 9 6 6 0 0 0 9-9z" fill="#1f78c8" /></svg>
        <span className="ml-[7px] font-bold text-[13px] leading-none -mt-[8px] shrink-0">°,</span>
        <svg viewBox="0 0 16 16" className="size-[15px] ml-[8px] shrink-0"><rect x="5" y="0" width="6" height="10" rx="3" fill="#1f78c8" /><path d="M3 7q0 5 5 5t5-5M8 12v3M5 15h6" fill="none" stroke="#1f78c8" /></svg>
        <svg viewBox="0 0 16 12" className="w-[16px] h-[12px] ml-[5px] shrink-0"><rect width="16" height="12" rx="2" fill="#1f78c8" /><path d="M2 3h12M2 6h12M4 9h8" stroke="#fff" strokeDasharray="1.500 1" /></svg>
        <svg viewBox="0 0 16 16" className="size-4 ml-[8px] shrink-0"><circle cx="6" cy="4" r="3" fill="#b0bcc8" /><path d="M1 15q0-7 5-7t5 7z" fill="#b0bcc8" /><path d="M9 9h6v6H9z" fill="#fff" stroke="#b0bcc8" /></svg>
        <svg viewBox="0 0 16 16" className="size-[15px] ml-[4px] shrink-0"><path d="M4 1h8l4 4-3 2v8H3V7L0 5z" fill="#1f78c8" /></svg>
        <svg viewBox="0 0 16 16" className="size-[15px] ml-[7px] shrink-0"><path d="M1 14l7-7q0-5 4-6l2 1-3 3 2 2 3-3 0 3q-2 4-6 3l-7 6z" fill="#1f78c8" /></svg>
      </div>

      {/* floating start widget */}
      <div className="absolute left-[1315px] top-[23px] w-[30px] h-[19px] bg-white text-[#b4b4b4] text-[11px] flex items-center pl-[2px]">Poi...</div>
      <div className="absolute left-[1346px] top-[23px] w-[19px] h-[19px] bg-[#e6e6e6]" />
      <div className="absolute left-[1314px] top-[46px] w-[51px] h-[21px] bg-[#f0f0f0] border border-[#555] shadow-[0_2px_3px_rgba(0,0,0,0.4)] flex items-center justify-center">开始</div>
    </div>
  );
}
